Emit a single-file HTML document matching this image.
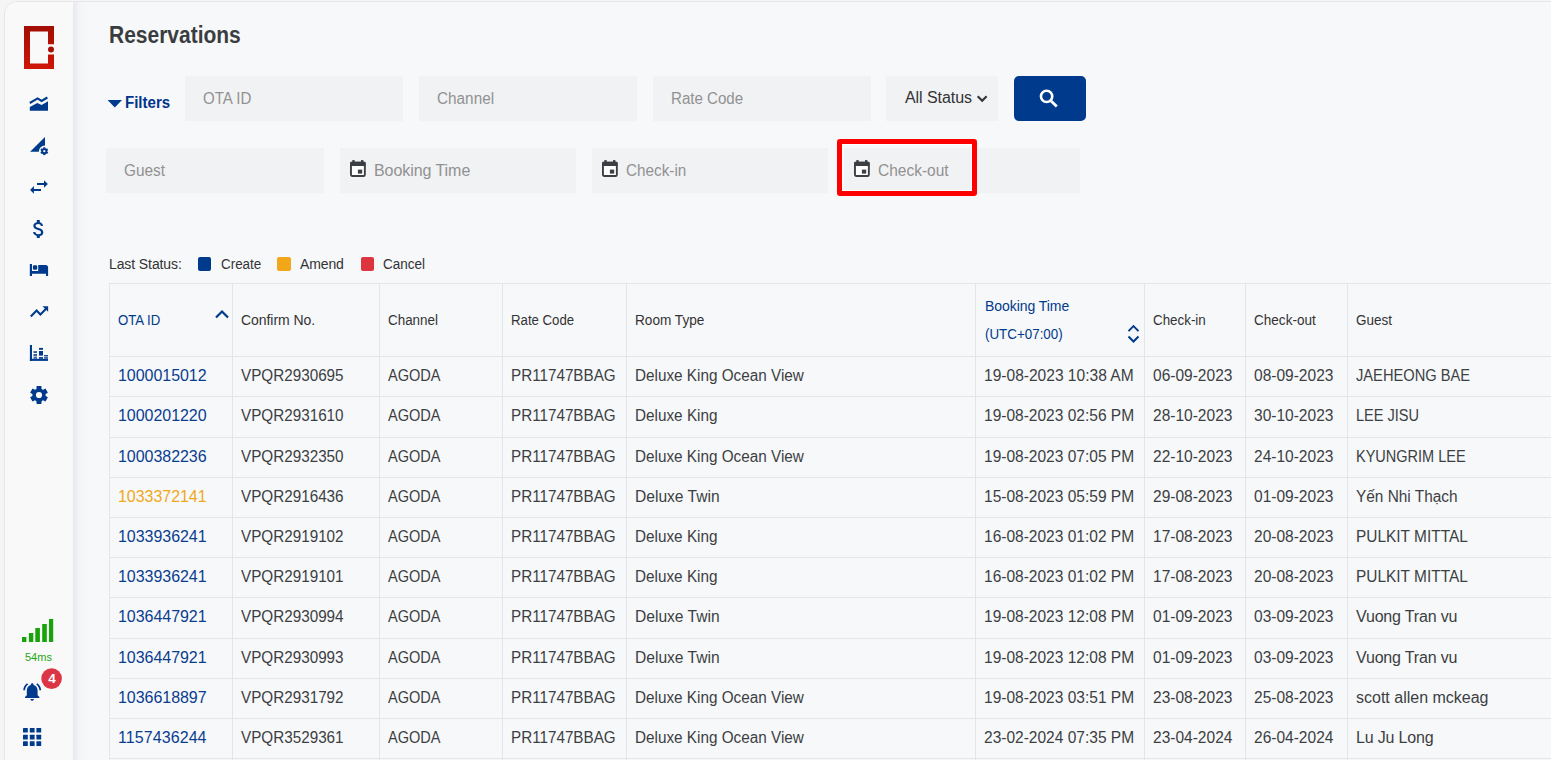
<!DOCTYPE html>
<html><head><meta charset="utf-8"><title>Reservations</title>
<style>
*{box-sizing:border-box}
html,body{margin:0;padding:0}
body{width:1551px;height:760px;overflow:hidden;background:#f5f5f5;font-family:"Liberation Sans",sans-serif;position:relative}
#frame{position:absolute;left:4px;top:1px;width:1600px;height:800px;border:1px solid #e6e6e6;border-top-left-radius:13px;background:#f7f8fa;overflow:hidden}
#side{position:absolute;left:0;top:0;width:68px;height:800px;background:#f8f8f8}
#shadow{position:absolute;left:68px;top:0;width:14px;height:800px;background:linear-gradient(to right,#eceef1,#f7f8fa)}
.abs{position:absolute}
.ic{position:absolute;overflow:visible}
.hl{position:absolute;left:109px;width:1442px;height:1px;background:#e4e5e8}
.vl{position:absolute;top:283px;width:1px;height:477px;background:#e4e5e8}
.th{position:absolute;font-size:14px;line-height:16px;white-space:nowrap}
.td{position:absolute;font-size:16px;line-height:20px;white-space:nowrap}
.inp{position:absolute;height:45px;background:#f1f2f4}
.ph{position:absolute;font-size:16px;line-height:20px;color:#919191;white-space:nowrap}
</style></head><body>
<div id="frame"></div>
<div class="abs" style="left:5px;top:2px;width:68px;height:758px;background:#f9f9f9;border-top-left-radius:12px"></div>
<div class="abs" style="left:73px;top:2px;width:16px;height:758px;background:linear-gradient(to right,#e9eaed 0px,#eceef1 3.5px,#f0f1f4 4.5px,#f3f4f6 6px,#f5f6f8 9px,#f6f7f9 14px,#f7f8fa 16px)"></div>

<!-- logo -->
<svg class="ic" style="left:24px;top:26px" width="30" height="43" viewBox="0 0 30 43">
<defs><linearGradient id="lg" x1="0" y1="0" x2="0" y2="1"><stop offset="0" stop-color="#a30d04"/><stop offset="1" stop-color="#cf1607"/></linearGradient></defs>
<path d="M0 0 H30 V18.3 H24 V5.6 H6 V37.4 H24 V28.5 H30 V43 H0 Z" fill="url(#lg)"/>
<circle cx="27" cy="23.6" r="3" fill="#a80f06"/>
</svg>

<!-- sidebar icons -->
<svg class="ic" style="left:26px;top:92px" width="26" height="22" viewBox="0 0 26 22">
<path d="M3.8 11 L11.6 6.4 L15.6 9 L21.4 5.5" fill="none" stroke="#003a8c" stroke-width="2.1"/>
<path d="M3.8 15.1 L11.3 11 L15.6 12.9 L22 9.3 V18.8 H3.8 Z" fill="#003a8c"/>
</svg>
<svg class="ic" style="left:26px;top:132px" width="26" height="26" viewBox="0 0 26 26">
<path d="M4.1 19.7 L19 5 V13.5 A6.2 6.2 0 0 0 12.8 19.7 Z" fill="#003a8c"/>
<g transform="translate(18.3 19.2)" fill="#003a8c">
<circle r="2.9"/>
<rect x="-1.1" y="-3.9" width="2.2" height="7.8"/>
<rect x="-1.1" y="-3.9" width="2.2" height="7.8" transform="rotate(60)"/>
<rect x="-1.1" y="-3.9" width="2.2" height="7.8" transform="rotate(120)"/>
</g>
<circle cx="18.3" cy="19.2" r="1.1" fill="#f9f9f9"/>
</svg>
<svg class="ic" style="left:26px;top:174px" width="26" height="26" viewBox="0 0 26 26">
<path d="M11 9 H18 V6.2 L21.9 9.95 L18 13.7 V10.9 H11 Z" fill="#003a8c"/>
<path d="M15 15 H7.9 V12 L4.1 15.9 L7.9 19.8 V16.9 H15 Z" fill="#003a8c"/>
</svg>
<svg class="ic" style="left:26px;top:216px" width="26" height="26" viewBox="0 0 26 26">
<g transform="translate(0.8 1.1)"><path fill="#003a8c" d="M11.8 10.9c-2.27-.59-3-1.2-3-2.15 0-1.09 1.01-1.85 2.7-1.85 1.78 0 2.44.85 2.5 2.1h2.21c-.07-1.72-1.12-3.3-3.21-3.81V3h-3v2.16c-1.94.42-3.5 1.68-3.5 3.61 0 2.310 1.91 3.46 4.7 4.13 2.5.6 3 1.48 3 2.41 0 .69-.49 1.79-2.7 1.79-2.06 0-2.87-.92-2.98-2.1h-2.2c.12 2.19 1.76 3.42 3.68 3.83V21h3v-2.15c1.95-.37 3.5-1.5 3.5-3.55 0-2.84-2.43-3.81-4.7-4.4z"/></g>
</svg>
<svg class="ic" style="left:26px;top:258px" width="26" height="26" viewBox="0 0 26 26" fill="#003a8c">
<rect x="3.8" y="6" width="2.2" height="12"/>
<rect x="6.9" y="7.2" width="4.3" height="4.6" rx="1.2"/>
<path d="M12.2 7 H19.6 A2.5 2.5 0 0 1 22.1 9.5 V18 H20 V15.8 H6 V13 H12.2 Z"/>
</svg>
<svg class="ic" style="left:26px;top:299px" width="26" height="26" viewBox="0 0 26 26">
<path d="M4.8 17.4 L10.6 11.6 L14.4 15.4 L20.6 9.2" fill="none" stroke="#003a8c" stroke-width="2.1"/>
<path d="M16.5 7.2 H22.1 V12.8 Z" fill="#003a8c"/>
</svg>
<svg class="ic" style="left:26px;top:340px" width="26" height="26" viewBox="0 0 26 26" fill="#003a8c">
<rect x="3.9" y="5" width="2.1" height="15.9"/>
<rect x="3.9" y="18.8" width="18.1" height="2.1"/>
<rect x="7.5" y="11.3" width="3.5" height="1.5"/><rect x="7.5" y="14.2" width="3.5" height="1.6"/><rect x="7.5" y="16.6" width="3.5" height="2.2" opacity=".75"/>
<rect x="13" y="7.9" width="4" height="1.9"/><rect x="13" y="11" width="4" height="4.6"/><rect x="13" y="17.1" width="4" height="1.7"/>
<rect x="18.1" y="15.1" width="3.9" height="1.1"/><rect x="18.1" y="16.6" width="3.9" height="2.2" opacity=".75"/>
</svg>
<svg class="ic" style="left:26px;top:382px" width="26" height="26" viewBox="0 0 26 26">
<g transform="translate(13 13)" fill="#003a8c">
<circle r="6.6"/>
<rect x="-2.5" y="-8.9" width="5" height="17.8" rx="0.6"/>
<rect x="-2.5" y="-8.9" width="5" height="17.8" rx="0.6" transform="rotate(60)"/>
<rect x="-2.5" y="-8.9" width="5" height="17.8" rx="0.6" transform="rotate(120)"/>
</g>
<circle cx="13" cy="13" r="3.1" fill="#f9f9f9"/>
</svg>

<!-- signal -->
<svg class="ic" style="left:22px;top:619px" width="32" height="24" viewBox="0 0 32 24" fill="#18a30b">
<rect x="0" y="18" width="4.4" height="5"/>
<rect x="6.9" y="14" width="4.4" height="9"/>
<rect x="13.3" y="9" width="4.6" height="14"/>
<rect x="20.2" y="5" width="4.6" height="18"/>
<rect x="27" y="0" width="4.2" height="23"/>
</svg>
<div class="abs" style="left:25px;top:651px;font-size:11px;line-height:12px;color:#1ea814">54ms</div>
<!-- bell -->
<svg class="ic" style="left:16px;top:666px" width="50" height="40" viewBox="0 0 50 40">
<g transform="translate(5.4 14.9) scale(0.9)" fill="#003a8c"><path d="M7.58 4.08L6.15 2.65C3.75 4.48 2.17 7.3 2.03 10.5h2c.15-2.65 1.51-4.970 3.55-6.42zm12.39 6.42h2c-.15-3.2-1.73-6.02-4.12-7.85l-1.42 1.43c2.02 1.45 3.39 3.77 3.54 6.42zM18 11c0-3.07-1.64-5.64-4.5-6.32V4c0-.83-.67-1.5-1.5-1.5s-1.5.67-1.5 1.5v.68C7.630 5.36 6 7.92 6 11v5l-2 2v1h16v-1l-2-2v-5zm-6 11c.14 0 .27-.01.4-.04.65-.14 1.18-.58 1.44-1.18.1-.24.15-.5.15-.78h-4c.01 1.1.9 2 2.010 2z"/></g>
<circle cx="35.6" cy="12.6" r="10.3" fill="#dc3545"/>
</svg>
<div class="abs" style="left:46px;top:672px;width:12px;text-align:center;font-size:13.5px;line-height:14px;font-weight:bold;color:#fff">4</div>
<!-- apps -->
<svg class="ic" style="left:23px;top:728px" width="19" height="19" viewBox="0 0 19 19" fill="#003a8c">
<rect x="0" y="0" width="4.8" height="4.6" rx=".5"/><rect x="6.8" y="0" width="4.8" height="4.6" rx=".5"/><rect x="13.4" y="0" width="4.8" height="4.6" rx=".5"/>
<rect x="0" y="6.8" width="4.8" height="4.6" rx=".5"/><rect x="6.8" y="6.8" width="4.8" height="4.6" rx=".5"/><rect x="13.4" y="6.8" width="4.8" height="4.6" rx=".5"/>
<rect x="0" y="13.3" width="4.8" height="4.6" rx=".5"/><rect x="6.8" y="13.3" width="4.8" height="4.6" rx=".5"/><rect x="13.4" y="13.3" width="4.8" height="4.6" rx=".5"/>
</svg>

<!-- title -->
<div class="abs" style="left:109px;top:22px;font-size:23px;line-height:26px;font-weight:bold;color:#3a3d40;transform:scaleX(0.912);transform-origin:0 0;white-space:nowrap">Reservations</div>

<!-- filters -->
<svg class="ic" style="left:107px;top:99px" width="16" height="9" viewBox="0 0 16 9"><path d="M0.6 1 H15 L7.8 8.4 Z" fill="#003a8c"/></svg>
<div class="abs" style="left:125px;top:94px;font-size:16px;line-height:18px;font-weight:bold;color:#00348c;transform:scaleX(0.94);transform-origin:0 0;white-space:nowrap">Filters</div>

<div class="inp" style="left:185px;top:76px;width:218px"></div>
<div class="ph" style="left:203px;top:89px;letter-spacing:0px;transform:scaleX(0.9435);transform-origin:0 0">OTA ID</div>
<div class="inp" style="left:419px;top:76px;width:218px"></div>
<div class="ph" style="left:437px;top:89px;letter-spacing:0px;transform:scaleX(0.9580);transform-origin:0 0">Channel</div>
<div class="inp" style="left:653px;top:76px;width:218px"></div>
<div class="ph" style="left:671px;top:89px;letter-spacing:0px;transform:scaleX(0.9431);transform-origin:0 0">Rate Code</div>
<div class="inp" style="left:886px;top:76px;width:112px"></div>
<div class="abs" style="left:905px;top:88px;font-size:16px;line-height:20px;color:#333;white-space:nowrap;letter-spacing:-0.06px">All Status</div>
<svg class="ic" style="left:975px;top:92px" width="14" height="12" viewBox="0 0 14 12"><path d="M2.7 4.2 L7.2 8.7 L11.6 4.2" fill="none" stroke="#333" stroke-width="2.1"/></svg>
<div class="abs" style="left:1014px;top:76px;width:72px;height:45px;border-radius:5px;background:#003a8c"></div>
<svg class="ic" style="left:1034px;top:84px" width="30" height="28" viewBox="0 0 30 28"><circle cx="12.6" cy="12.35" r="5.65" fill="none" stroke="#fff" stroke-width="2.6"/><path d="M16.6 16.4 L22.8 22.6" stroke="#fff" stroke-width="2.8"/></svg>

<div class="inp" style="left:106px;top:148px;width:218px"></div>
<div class="ph" style="left:124px;top:161px;letter-spacing:0px;transform:scaleX(0.9615);transform-origin:0 0">Guest</div>
<div class="inp" style="left:340px;top:148px;width:236px"></div>
<svg class="ic" style="left:350px;top:160px" width="16" height="18" viewBox="0 0 16 18"><rect x="0.95" y="2.65" width="13.9" height="13.4" rx="1.3" fill="#fff" stroke="#3b3f43" stroke-width="1.9"/><rect x="0.2" y="1.7" width="15.4" height="4.4" rx="1" fill="#3b3f43"/><rect x="2.3" y="0.1" width="2.4" height="2" fill="#3b3f43"/><rect x="11" y="0.1" width="2.4" height="2" fill="#3b3f43"/><rect x="7.9" y="9.6" width="4.3" height="4" fill="#3b3f43"/></svg>
<div class="ph" style="left:374px;top:161px;letter-spacing:-0.06px">Booking Time</div>
<div class="inp" style="left:592px;top:148px;width:236px"></div>
<svg class="ic" style="left:602px;top:160px" width="16" height="18" viewBox="0 0 16 18"><rect x="0.95" y="2.65" width="13.9" height="13.4" rx="1.3" fill="#fff" stroke="#3b3f43" stroke-width="1.9"/><rect x="0.2" y="1.7" width="15.4" height="4.4" rx="1" fill="#3b3f43"/><rect x="2.3" y="0.1" width="2.4" height="2" fill="#3b3f43"/><rect x="11" y="0.1" width="2.4" height="2" fill="#3b3f43"/><rect x="7.9" y="9.6" width="4.3" height="4" fill="#3b3f43"/></svg>
<div class="ph" style="left:626px;top:161px;letter-spacing:0px;transform:scaleX(0.9551);transform-origin:0 0">Check-in</div>
<div class="inp" style="left:844px;top:148px;width:236px"></div>
<svg class="ic" style="left:854px;top:160px" width="16" height="18" viewBox="0 0 16 18"><rect x="0.95" y="2.65" width="13.9" height="13.4" rx="1.3" fill="#fff" stroke="#3b3f43" stroke-width="1.9"/><rect x="0.2" y="1.7" width="15.4" height="4.4" rx="1" fill="#3b3f43"/><rect x="2.3" y="0.1" width="2.4" height="2" fill="#3b3f43"/><rect x="11" y="0.1" width="2.4" height="2" fill="#3b3f43"/><rect x="7.9" y="9.6" width="4.3" height="4" fill="#3b3f43"/></svg>
<div class="ph" style="left:878px;top:161px;letter-spacing:0px;transform:scaleX(0.9681);transform-origin:0 0">Check-out</div>
<div class="abs" style="left:837px;top:139px;width:140px;height:57px;border:5px solid #ff0000;border-radius:3px;box-shadow:inset 0 0 0 1px #fff"></div>

<!-- legend -->
<div class="abs" style="left:109px;top:256px;font-size:14px;line-height:16px;color:#333;white-space:nowrap;letter-spacing:-0.10px">Last Status:</div>
<div class="abs" style="left:198px;top:257px;width:13px;height:14px;border-radius:2px;background:#003a8c"></div>
<div class="abs" style="left:221px;top:256px;font-size:14px;line-height:16px;color:#333;letter-spacing:0px;transform:scaleX(0.9579);transform-origin:0 0">Create</div>
<div class="abs" style="left:277px;top:257px;width:14px;height:14px;border-radius:2px;background:#f2a71b"></div>
<div class="abs" style="left:300px;top:256px;font-size:14px;line-height:16px;color:#333;letter-spacing:-0.12px">Amend</div>
<div class="abs" style="left:361px;top:257px;width:13px;height:14px;border-radius:2px;background:#dc3540"></div>
<div class="abs" style="left:383px;top:256px;font-size:14px;line-height:16px;color:#333;letter-spacing:0px;transform:scaleX(0.9626);transform-origin:0 0">Cancel</div>

<div class="hl" style="top:283px"></div>
<div class="hl" style="top:356px"></div>
<div class="hl" style="top:396px"></div>
<div class="hl" style="top:437px"></div>
<div class="hl" style="top:477px"></div>
<div class="hl" style="top:517px"></div>
<div class="hl" style="top:557px"></div>
<div class="hl" style="top:597px"></div>
<div class="hl" style="top:638px"></div>
<div class="hl" style="top:678px"></div>
<div class="hl" style="top:718px"></div>
<div class="hl" style="top:758px"></div>
<div class="vl" style="left:109px"></div>
<div class="vl" style="left:232px"></div>
<div class="vl" style="left:379px"></div>
<div class="vl" style="left:502px"></div>
<div class="vl" style="left:626px"></div>
<div class="vl" style="left:975px"></div>
<div class="vl" style="left:1144px"></div>
<div class="vl" style="left:1245px"></div>
<div class="vl" style="left:1347px"></div>
<div class="th" style="left:118px;top:312px;color:#003a8c;letter-spacing:0px;transform:scaleX(0.9435);transform-origin:0 0">OTA ID</div>
<div class="th" style="left:241px;top:312px;color:#333;letter-spacing:-0.05px">Confirm No.</div>
<div class="th" style="left:388px;top:312px;color:#333;letter-spacing:0px;transform:scaleX(0.9580);transform-origin:0 0">Channel</div>
<div class="th" style="left:511px;top:312px;color:#333;letter-spacing:0px;transform:scaleX(0.9431);transform-origin:0 0">Rate Code</div>
<div class="th" style="left:635px;top:312px;color:#333;letter-spacing:0px;transform:scaleX(0.9723);transform-origin:0 0">Room Type</div>
<div class="th" style="left:1153px;top:312px;color:#333;letter-spacing:0px;transform:scaleX(0.9551);transform-origin:0 0">Check-in</div>
<div class="th" style="left:1254px;top:312px;color:#333;letter-spacing:0px;transform:scaleX(0.9681);transform-origin:0 0">Check-out</div>
<div class="th" style="left:1356px;top:312px;color:#333;letter-spacing:0px;transform:scaleX(0.9615);transform-origin:0 0">Guest</div>
<div class="th" style="left:985px;top:298px;color:#003a8c;letter-spacing:-0.05px">Booking Time</div>
<div class="th" style="left:985px;top:326px;color:#003a8c;letter-spacing:0px;transform:scaleX(0.9557);transform-origin:0 0">(UTC+07:00)</div>
<svg class="ic" style="left:214px;top:308px" width="16" height="12" viewBox="0 0 16 12"><path d="M2 9.5 L8 3.5 L14 9.5" fill="none" stroke="#003a8c" stroke-width="2.2"/></svg>
<svg class="ic" style="left:1125px;top:322px" width="16" height="23" viewBox="0 0 16 23"><path d="M3.5 9.1 L8.5 4.1 L13.5 9.1 M3.5 14.5 L8.5 19.5 L13.5 14.5" fill="none" stroke="#003a8c" stroke-width="2"/></svg>
<div class="td" style="left:118px;top:366px;color:#0b3d8f;letter-spacing:-0.04px">1000015012</div>
<div class="td" style="left:241px;top:366px;color:#3c3f42;letter-spacing:0px;transform:scaleX(0.9529);transform-origin:0 0">VPQR2930695</div>
<div class="td" style="left:388px;top:366px;color:#3c3f42;letter-spacing:0px;transform:scaleX(0.9090);transform-origin:0 0">AGODA</div>
<div class="td" style="left:511px;top:366px;color:#3c3f42;letter-spacing:0px;transform:scaleX(0.9516);transform-origin:0 0">PR11747BBAG</div>
<div class="td" style="left:635px;top:366px;color:#3c3f42;letter-spacing:0px;transform:scaleX(0.9554);transform-origin:0 0">Deluxe King Ocean View</div>
<div class="td" style="left:984px;top:366px;color:#3c3f42;letter-spacing:0px;transform:scaleX(0.9720);transform-origin:0 0">19-08-2023 10:38 AM</div>
<div class="td" style="left:1153px;top:366px;color:#3c3f42;letter-spacing:0px;transform:scaleX(0.9700);transform-origin:0 0">06-09-2023</div>
<div class="td" style="left:1254px;top:366px;color:#3c3f42;letter-spacing:0px;transform:scaleX(0.9700);transform-origin:0 0">08-09-2023</div>
<div class="td" style="left:1356px;top:366px;color:#3c3f42;letter-spacing:0px;transform:scaleX(0.9160);transform-origin:0 0">JAEHEONG BAE</div>
<div class="td" style="left:118px;top:406px;color:#0b3d8f;letter-spacing:-0.04px">1000201220</div>
<div class="td" style="left:241px;top:406px;color:#3c3f42;letter-spacing:0px;transform:scaleX(0.9529);transform-origin:0 0">VPQR2931610</div>
<div class="td" style="left:388px;top:406px;color:#3c3f42;letter-spacing:0px;transform:scaleX(0.9090);transform-origin:0 0">AGODA</div>
<div class="td" style="left:511px;top:406px;color:#3c3f42;letter-spacing:0px;transform:scaleX(0.9516);transform-origin:0 0">PR11747BBAG</div>
<div class="td" style="left:635px;top:406px;color:#3c3f42;letter-spacing:0px;transform:scaleX(0.9563);transform-origin:0 0">Deluxe King</div>
<div class="td" style="left:984px;top:406px;color:#3c3f42;letter-spacing:0px;transform:scaleX(0.9698);transform-origin:0 0">19-08-2023 02:56 PM</div>
<div class="td" style="left:1153px;top:406px;color:#3c3f42;letter-spacing:0px;transform:scaleX(0.9700);transform-origin:0 0">28-10-2023</div>
<div class="td" style="left:1254px;top:406px;color:#3c3f42;letter-spacing:0px;transform:scaleX(0.9700);transform-origin:0 0">30-10-2023</div>
<div class="td" style="left:1356px;top:406px;color:#3c3f42;letter-spacing:0px;transform:scaleX(0.9089);transform-origin:0 0">LEE JISU</div>
<div class="td" style="left:118px;top:447px;color:#0b3d8f;letter-spacing:-0.04px">1000382236</div>
<div class="td" style="left:241px;top:447px;color:#3c3f42;letter-spacing:0px;transform:scaleX(0.9529);transform-origin:0 0">VPQR2932350</div>
<div class="td" style="left:388px;top:447px;color:#3c3f42;letter-spacing:0px;transform:scaleX(0.9090);transform-origin:0 0">AGODA</div>
<div class="td" style="left:511px;top:447px;color:#3c3f42;letter-spacing:0px;transform:scaleX(0.9516);transform-origin:0 0">PR11747BBAG</div>
<div class="td" style="left:635px;top:447px;color:#3c3f42;letter-spacing:0px;transform:scaleX(0.9554);transform-origin:0 0">Deluxe King Ocean View</div>
<div class="td" style="left:984px;top:447px;color:#3c3f42;letter-spacing:0px;transform:scaleX(0.9698);transform-origin:0 0">19-08-2023 07:05 PM</div>
<div class="td" style="left:1153px;top:447px;color:#3c3f42;letter-spacing:0px;transform:scaleX(0.9700);transform-origin:0 0">22-10-2023</div>
<div class="td" style="left:1254px;top:447px;color:#3c3f42;letter-spacing:0px;transform:scaleX(0.9700);transform-origin:0 0">24-10-2023</div>
<div class="td" style="left:1356px;top:447px;color:#3c3f42;letter-spacing:0px;transform:scaleX(0.9070);transform-origin:0 0">KYUNGRIM LEE</div>
<div class="td" style="left:118px;top:487px;color:#f0a81c;letter-spacing:-0.04px">1033372141</div>
<div class="td" style="left:241px;top:487px;color:#3c3f42;letter-spacing:0px;transform:scaleX(0.9529);transform-origin:0 0">VPQR2916436</div>
<div class="td" style="left:388px;top:487px;color:#3c3f42;letter-spacing:0px;transform:scaleX(0.9090);transform-origin:0 0">AGODA</div>
<div class="td" style="left:511px;top:487px;color:#3c3f42;letter-spacing:0px;transform:scaleX(0.9516);transform-origin:0 0">PR11747BBAG</div>
<div class="td" style="left:635px;top:487px;color:#3c3f42;letter-spacing:0px;transform:scaleX(0.9741);transform-origin:0 0">Deluxe Twin</div>
<div class="td" style="left:984px;top:487px;color:#3c3f42;letter-spacing:0px;transform:scaleX(0.9698);transform-origin:0 0">15-08-2023 05:59 PM</div>
<div class="td" style="left:1153px;top:487px;color:#3c3f42;letter-spacing:0px;transform:scaleX(0.9700);transform-origin:0 0">29-08-2023</div>
<div class="td" style="left:1254px;top:487px;color:#3c3f42;letter-spacing:0px;transform:scaleX(0.9700);transform-origin:0 0">01-09-2023</div>
<div class="td" style="left:1356px;top:487px;color:#3c3f42;letter-spacing:0px;transform:scaleX(0.9618);transform-origin:0 0">Yến Nhi Thạch</div>
<div class="td" style="left:118px;top:527px;color:#0b3d8f;letter-spacing:-0.04px">1033936241</div>
<div class="td" style="left:241px;top:527px;color:#3c3f42;letter-spacing:0px;transform:scaleX(0.9529);transform-origin:0 0">VPQR2919102</div>
<div class="td" style="left:388px;top:527px;color:#3c3f42;letter-spacing:0px;transform:scaleX(0.9090);transform-origin:0 0">AGODA</div>
<div class="td" style="left:511px;top:527px;color:#3c3f42;letter-spacing:0px;transform:scaleX(0.9516);transform-origin:0 0">PR11747BBAG</div>
<div class="td" style="left:635px;top:527px;color:#3c3f42;letter-spacing:0px;transform:scaleX(0.9563);transform-origin:0 0">Deluxe King</div>
<div class="td" style="left:984px;top:527px;color:#3c3f42;letter-spacing:0px;transform:scaleX(0.9698);transform-origin:0 0">16-08-2023 01:02 PM</div>
<div class="td" style="left:1153px;top:527px;color:#3c3f42;letter-spacing:0px;transform:scaleX(0.9700);transform-origin:0 0">17-08-2023</div>
<div class="td" style="left:1254px;top:527px;color:#3c3f42;letter-spacing:0px;transform:scaleX(0.9700);transform-origin:0 0">20-08-2023</div>
<div class="td" style="left:1356px;top:527px;color:#3c3f42;letter-spacing:0px;transform:scaleX(0.9650);transform-origin:0 0">PULKIT MITTAL</div>
<div class="td" style="left:118px;top:567px;color:#0b3d8f;letter-spacing:-0.04px">1033936241</div>
<div class="td" style="left:241px;top:567px;color:#3c3f42;letter-spacing:0px;transform:scaleX(0.9529);transform-origin:0 0">VPQR2919101</div>
<div class="td" style="left:388px;top:567px;color:#3c3f42;letter-spacing:0px;transform:scaleX(0.9090);transform-origin:0 0">AGODA</div>
<div class="td" style="left:511px;top:567px;color:#3c3f42;letter-spacing:0px;transform:scaleX(0.9516);transform-origin:0 0">PR11747BBAG</div>
<div class="td" style="left:635px;top:567px;color:#3c3f42;letter-spacing:0px;transform:scaleX(0.9563);transform-origin:0 0">Deluxe King</div>
<div class="td" style="left:984px;top:567px;color:#3c3f42;letter-spacing:0px;transform:scaleX(0.9698);transform-origin:0 0">16-08-2023 01:02 PM</div>
<div class="td" style="left:1153px;top:567px;color:#3c3f42;letter-spacing:0px;transform:scaleX(0.9700);transform-origin:0 0">17-08-2023</div>
<div class="td" style="left:1254px;top:567px;color:#3c3f42;letter-spacing:0px;transform:scaleX(0.9700);transform-origin:0 0">20-08-2023</div>
<div class="td" style="left:1356px;top:567px;color:#3c3f42;letter-spacing:0px;transform:scaleX(0.9650);transform-origin:0 0">PULKIT MITTAL</div>
<div class="td" style="left:118px;top:607px;color:#0b3d8f;letter-spacing:-0.04px">1036447921</div>
<div class="td" style="left:241px;top:607px;color:#3c3f42;letter-spacing:0px;transform:scaleX(0.9529);transform-origin:0 0">VPQR2930994</div>
<div class="td" style="left:388px;top:607px;color:#3c3f42;letter-spacing:0px;transform:scaleX(0.9090);transform-origin:0 0">AGODA</div>
<div class="td" style="left:511px;top:607px;color:#3c3f42;letter-spacing:0px;transform:scaleX(0.9516);transform-origin:0 0">PR11747BBAG</div>
<div class="td" style="left:635px;top:607px;color:#3c3f42;letter-spacing:0px;transform:scaleX(0.9741);transform-origin:0 0">Deluxe Twin</div>
<div class="td" style="left:984px;top:607px;color:#3c3f42;letter-spacing:0px;transform:scaleX(0.9698);transform-origin:0 0">19-08-2023 12:08 PM</div>
<div class="td" style="left:1153px;top:607px;color:#3c3f42;letter-spacing:0px;transform:scaleX(0.9700);transform-origin:0 0">01-09-2023</div>
<div class="td" style="left:1254px;top:607px;color:#3c3f42;letter-spacing:0px;transform:scaleX(0.9700);transform-origin:0 0">03-09-2023</div>
<div class="td" style="left:1356px;top:607px;color:#3c3f42;letter-spacing:-0.17px">Vuong Tran vu</div>
<div class="td" style="left:118px;top:648px;color:#0b3d8f;letter-spacing:-0.04px">1036447921</div>
<div class="td" style="left:241px;top:648px;color:#3c3f42;letter-spacing:0px;transform:scaleX(0.9529);transform-origin:0 0">VPQR2930993</div>
<div class="td" style="left:388px;top:648px;color:#3c3f42;letter-spacing:0px;transform:scaleX(0.9090);transform-origin:0 0">AGODA</div>
<div class="td" style="left:511px;top:648px;color:#3c3f42;letter-spacing:0px;transform:scaleX(0.9516);transform-origin:0 0">PR11747BBAG</div>
<div class="td" style="left:635px;top:648px;color:#3c3f42;letter-spacing:0px;transform:scaleX(0.9741);transform-origin:0 0">Deluxe Twin</div>
<div class="td" style="left:984px;top:648px;color:#3c3f42;letter-spacing:0px;transform:scaleX(0.9698);transform-origin:0 0">19-08-2023 12:08 PM</div>
<div class="td" style="left:1153px;top:648px;color:#3c3f42;letter-spacing:0px;transform:scaleX(0.9700);transform-origin:0 0">01-09-2023</div>
<div class="td" style="left:1254px;top:648px;color:#3c3f42;letter-spacing:0px;transform:scaleX(0.9700);transform-origin:0 0">03-09-2023</div>
<div class="td" style="left:1356px;top:648px;color:#3c3f42;letter-spacing:-0.17px">Vuong Tran vu</div>
<div class="td" style="left:118px;top:688px;color:#0b3d8f;letter-spacing:-0.04px">1036618897</div>
<div class="td" style="left:241px;top:688px;color:#3c3f42;letter-spacing:0px;transform:scaleX(0.9529);transform-origin:0 0">VPQR2931792</div>
<div class="td" style="left:388px;top:688px;color:#3c3f42;letter-spacing:0px;transform:scaleX(0.9090);transform-origin:0 0">AGODA</div>
<div class="td" style="left:511px;top:688px;color:#3c3f42;letter-spacing:0px;transform:scaleX(0.9516);transform-origin:0 0">PR11747BBAG</div>
<div class="td" style="left:635px;top:688px;color:#3c3f42;letter-spacing:0px;transform:scaleX(0.9554);transform-origin:0 0">Deluxe King Ocean View</div>
<div class="td" style="left:984px;top:688px;color:#3c3f42;letter-spacing:0px;transform:scaleX(0.9698);transform-origin:0 0">19-08-2023 03:51 PM</div>
<div class="td" style="left:1153px;top:688px;color:#3c3f42;letter-spacing:0px;transform:scaleX(0.9700);transform-origin:0 0">23-08-2023</div>
<div class="td" style="left:1254px;top:688px;color:#3c3f42;letter-spacing:0px;transform:scaleX(0.9700);transform-origin:0 0">25-08-2023</div>
<div class="td" style="left:1356px;top:688px;color:#3c3f42;letter-spacing:0.00px">scott allen mckeag</div>
<div class="td" style="left:118px;top:728px;color:#0b3d8f;letter-spacing:0.08px">1157436244</div>
<div class="td" style="left:241px;top:728px;color:#3c3f42;letter-spacing:0px;transform:scaleX(0.9529);transform-origin:0 0">VPQR3529361</div>
<div class="td" style="left:388px;top:728px;color:#3c3f42;letter-spacing:0px;transform:scaleX(0.9090);transform-origin:0 0">AGODA</div>
<div class="td" style="left:511px;top:728px;color:#3c3f42;letter-spacing:0px;transform:scaleX(0.9516);transform-origin:0 0">PR11747BBAG</div>
<div class="td" style="left:635px;top:728px;color:#3c3f42;letter-spacing:0px;transform:scaleX(0.9554);transform-origin:0 0">Deluxe King Ocean View</div>
<div class="td" style="left:984px;top:728px;color:#3c3f42;letter-spacing:0px;transform:scaleX(0.9698);transform-origin:0 0">23-02-2024 07:35 PM</div>
<div class="td" style="left:1153px;top:728px;color:#3c3f42;letter-spacing:0px;transform:scaleX(0.9700);transform-origin:0 0">23-04-2024</div>
<div class="td" style="left:1254px;top:728px;color:#3c3f42;letter-spacing:0px;transform:scaleX(0.9700);transform-origin:0 0">26-04-2024</div>
<div class="td" style="left:1356px;top:728px;color:#3c3f42;letter-spacing:-0.18px">Lu Ju Long</div>
</body></html>
